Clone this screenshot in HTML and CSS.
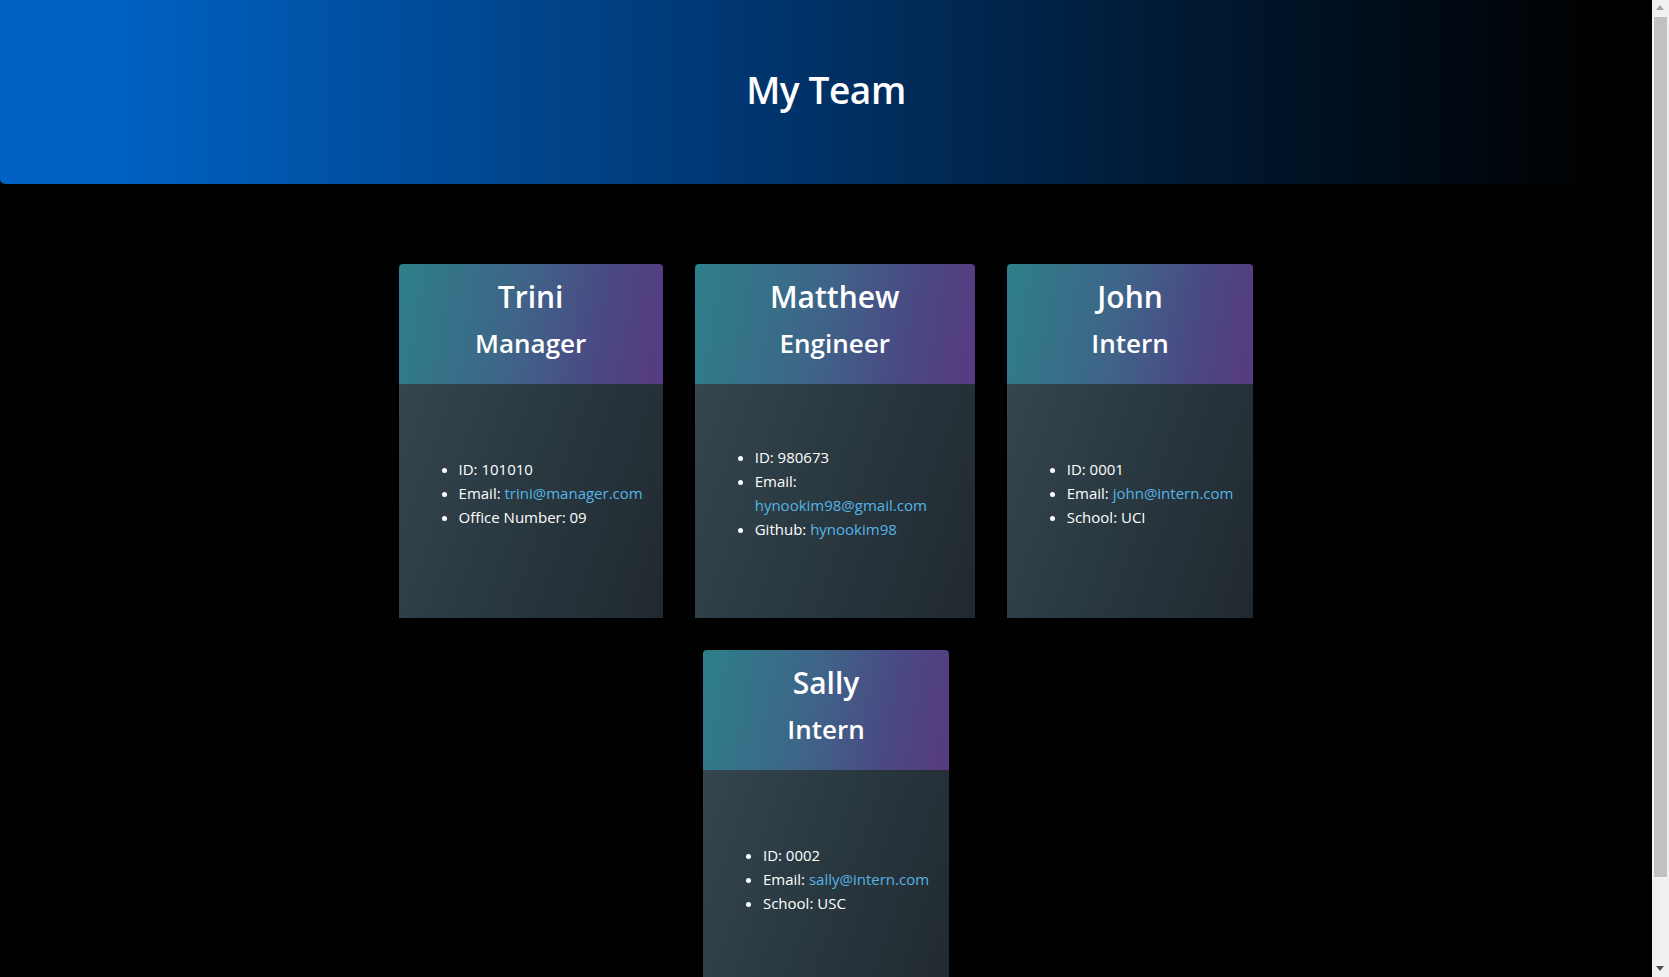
FILE: index.html
```html
<!DOCTYPE html>
<html lang="en">
<head>
<meta charset="UTF-8">
<title>My Team</title>
<link rel="stylesheet" href="styles.css">
</head>
<body>
<header class="jumbotron">
  <h1 class="title">My Team</h1>
</header>
<main class="team">
  <div class="card">
    <div class="card-header">
      <h2 class="name">Trini</h2>
      <h3 class="role">Manager</h3>
    </div>
    <div class="card-body">
      <ul class="info">
        <li>ID: 101010</li>
        <li>Email: <a href="#">trini@manager.com</a></li>
        <li>Office Number: 09</li>
      </ul>
    </div>
  </div>
  <div class="card">
    <div class="card-header">
      <h2 class="name">Matthew</h2>
      <h3 class="role">Engineer</h3>
    </div>
    <div class="card-body">
      <ul class="info">
        <li>ID: 980673</li>
        <li>Email: <a href="#">hynookim98@gmail.com</a></li>
        <li>Github: <a href="#">hynookim98</a></li>
      </ul>
    </div>
  </div>
  <div class="card">
    <div class="card-header">
      <h2 class="name">John</h2>
      <h3 class="role">Intern</h3>
    </div>
    <div class="card-body">
      <ul class="info">
        <li>ID: 0001</li>
        <li>Email: <a href="#">john@intern.com</a></li>
        <li>School: UCI</li>
      </ul>
    </div>
  </div>
  <div class="card">
    <div class="card-header">
      <h2 class="name">Sally</h2>
      <h3 class="role">Intern</h3>
    </div>
    <div class="card-body">
      <ul class="info">
        <li>ID: 0002</li>
        <li>Email: <a href="#">sally@intern.com</a></li>
        <li>School: USC</li>
      </ul>
    </div>
  </div>
</main>
<div class="scrollbar" aria-hidden="true">
  <span class="arrow arrow-up"></span>
  <span class="thumb"></span>
  <span class="arrow arrow-down"></span>
</div>
</body>
</html>
```
FILE: styles.css
```css
html, body {
  margin: 0;
  padding: 0;
}
body {
  background: #000;
  color: #fff;
  font-family: "Open Sans", "Noto Sans", "Liberation Sans", sans-serif;
  font-size: 16px;
  line-height: 1.5;
  margin-right: 17px;
}
.jumbotron {
  height: 184px;
  display: flex;
  align-items: center;
  justify-content: center;
  border-radius: 0 0 5px 5px;
  background: linear-gradient(90deg, #0062c4 6%, #003670 45%, #001b36 70%, #000 97%);
}
.title {
  margin: 0 0 4px;
  font-size: 37px;
  font-weight: 600;
  line-height: 1.2;
  letter-spacing: -0.4px;
}
.team {
  display: flex;
  flex-wrap: wrap;
  justify-content: center;
  gap: 32px;
  padding: 80px 0 56px;
  max-width: 1000px;
  margin: 0 auto;
}
.card {
  max-width: 280px;
  height: 354px;
  display: flex;
  flex-direction: column;
}
.card-header {
  height: 120px;
  box-sizing: border-box;
  padding: 13px 20px 12px;
  text-align: center;
  border-radius: 4px 4px 0 0;
  background: linear-gradient(100deg, #2d7f89 0%, #3f6488 45%, #4a4984 75%, #573a80 100%);
}
.name {
  margin: 0 0 8px;
  font-size: 30px;
  font-weight: 600;
  line-height: 40px;
}
.role {
  margin: 0;
  font-size: 26px;
  font-weight: 600;
  line-height: 36px;
}
.card-body {
  flex: 1;
  display: flex;
  align-items: center;
  padding: 0 20px;
  background: linear-gradient(110deg, #35464f 0%, #29373f 50%, #212930 100%);
}
.info {
  margin: 0 0 16px;
  padding-left: 40px;
  font-size: 15px;
  line-height: 24px;
}
.info a {
  color: #55b4e6;
  text-decoration: none;
}
.scrollbar {
  position: fixed;
  top: 0;
  right: 0;
  width: 17px;
  height: 100vh;
  background: #f1f1f1;
}
.thumb {
  position: absolute;
  top: 17px;
  left: 2px;
  width: 13px;
  height: 860px;
  background: #c1c1c1;
}
.arrow {
  position: absolute;
  left: 4px;
  width: 0;
  height: 0;
  border-left: 4.5px solid transparent;
  border-right: 4.5px solid transparent;
}
.arrow-up {
  top: 5px;
  border-bottom: 5px solid #a3a3a3;
}
.arrow-down {
  bottom: 6px;
  border-top: 5px solid #505050;
}
```
